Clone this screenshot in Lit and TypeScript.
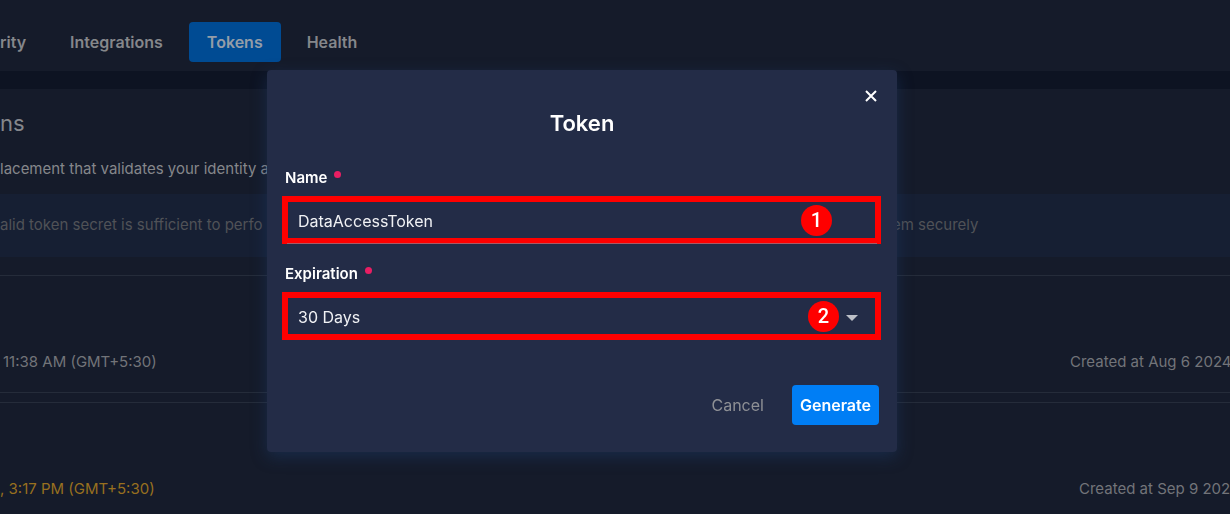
import { LitElement, html, css } from "lit";
import { customElement, property } from "lit/decorators.js";

@customElement("token-dialog")
export class TokenDialog extends LitElement {
  static styles = css`
    :host {
      display: block;
      box-sizing: border-box;
      width: 100%;
      max-width: 630px;
    }
    *, *::before, *::after { box-sizing: border-box; }
    .dialog {
      display: flex;
      flex-direction: column;
      padding: 16px 16px 27px;
      border-radius: 4px;
      background: #232c47;
      color: #fff;
      box-shadow: 0 5px 16px rgba(28, 62, 110, 0.45);
    }
    button, input, select { font: inherit; }
    .close {
      align-self: flex-end;
      display: grid;
      place-items: center;
      width: 20px;
      height: 20px;
      padding: 0;
      border: 0;
      background: none;
      color: #fff;
    }
    .title {
      margin: 1px 0 27px;
      font-size: 22px;
      font-weight: 600;
      line-height: 32px;
      text-align: center;
    }
    .label {
      display: flex;
      gap: 7px;
      padding: 0 2px;
      font-size: 15px;
      font-weight: 600;
      line-height: 24px;
    }
    .required {
      width: 7px;
      height: 7px;
      margin-top: 5px;
      border-radius: 50%;
      background: #e91e63;
    }
    .field {
      position: relative;
      height: 48px;
      margin: 6px 0 18px -1px;
      border: 6px solid #f00;
    }
    .control {
      display: block;
      width: 100%;
      height: 100%;
      padding: 2px 10px 0;
      border: 0;
      border-radius: 0;
      outline: 0;
      appearance: none;
      background: transparent;
      color: #f0f1f4;
      font-size: 16px;
    }
    .underline::after {
      content: "";
      position: absolute;
      right: -2px;
      bottom: -6px;
      left: -1px;
      height: 1px;
      background: #a85a66;
    }
    .control option { color: #000; }
    .badge {
      position: absolute;
      top: 3px;
      right: 43px;
      width: 31px;
      height: 31px;
      border-radius: 50%;
      background: #f00;
      font: 500 20px/30px Roboto, sans-serif;
      text-align: center;
      pointer-events: none;
    }
    .beside-arrow { right: 36px; }
    .arrow {
      position: absolute;
      top: 17px;
      right: 17px;
      pointer-events: none;
    }
    .actions {
      display: flex;
      justify-content: flex-end;
      gap: 20px;
      padding: 27px 2px 0;
    }
    .button {
      height: 40px;
      padding: 0 8px;
      border: 0;
      border-radius: 4px;
      background: none;
      color: #8e9095;
      font-size: 16px;
    }
    .primary {
      background: #007ef5;
      color: #fff;
      font-weight: 600;
    }
  `;

  render() {
    return html`
      <form class="dialog" role="dialog" aria-labelledby="title" @submit=${(e: Event) => e.preventDefault()}>
        <button class="close" type="button" aria-label="Close">
          <svg width="12" height="12" viewBox="0 0 12 12" fill="none" stroke="currentColor" stroke-width="2">
            <path d="M1 1l10 10M11 1L1 11" />
          </svg>
        </button>
        <h2 class="title" id="title">Token</h2>
        <label class="label" for="name">Name<span class="required"></span></label>
        <div class="field underline">
          <input class="control" id="name" type="text" value="DataAccessToken" required />
          <span class="badge">1</span>
        </div>
        <label class="label" for="expiration">Expiration<span class="required"></span></label>
        <div class="field">
          <select class="control" id="expiration" required>
            <option>30 Days</option>
          </select>
          <span class="badge beside-arrow">2</span>
          <svg class="arrow" width="12" height="6" viewBox="0 0 12 6"><path d="M0 0h12L6 6z" fill="#bdc0c8" /></svg>
        </div>
        <div class="actions">
          <button class="button" type="button">Cancel</button>
          <button class="button primary" type="submit">Generate</button>
        </div>
      </form>
    `;
  }
}

@customElement("token-row")
export class TokenRow extends LitElement {
  @property() expires = "";
  @property() created = "";
  @property({ type: Boolean, reflect: true }) expiring = false;

  static styles = css`
    :host {
      display: flex;
      justify-content: space-between;
      align-items: flex-end;
      height: 118px;
      box-sizing: border-box;
      padding-bottom: 18px;
      border: solid #252c3a;
      border-width: 1px 0;
      color: #727479;
      line-height: 24px;
      white-space: nowrap;
    }
    :host([expiring]) .expires { color: #98701f; }
    .expires { padding-left: 3px; }
    :host([expiring]) .expires { padding-left: 0; }
    .created { width: 160px; }
    :host([expiring]) .created { width: 151px; }
  `;

  render() {
    return html`
      <span class="expires">${this.expires}</span>
      <span class="created">${this.created}</span>
    `;
  }
}

@customElement("app-root")
export class AppRoot extends LitElement {
  static styles = css`
    :host {
      display: block;
      height: 100vh;
      overflow: hidden;
      background: #0d1322;
      color: #85878b;
      font-family: Inter, "Open Sans", sans-serif;
      font-size: 15px;
      line-height: 24px;
    }
    *, *::before, *::after { box-sizing: border-box; }
    .nav {
      display: flex;
      gap: 8px;
      padding: 22px 0 9px;
      background: #151b2a;
      font-size: 16px;
    }
    .tab {
      padding: 8px 18px;
      border-radius: 4px;
      color: inherit;
      font-weight: 600;
      text-decoration: none;
    }
    .tab:first-child { padding-left: 0; }
    .active { background: #004b93; color: #949da8; }
    .panel {
      margin-top: 18px;
      background: #151b2a;
      white-space: nowrap;
    }
    .heading {
      margin: 0;
      padding-top: 18px;
      font-size: 22px;
      font-weight: 400;
      line-height: 32px;
    }
    .intro { margin: 0; padding: 18px 0 13px; }
    .notice {
      display: grid;
      grid-template-columns: minmax(0, 892fr) minmax(0, 338fr);
      margin-bottom: 18px;
      padding: 19px 0 20px;
      background: #161f33;
      color: #505257;
    }
    .list {
      display: flex;
      flex-direction: column;
      gap: 9px;
    }
    .overlay {
      position: fixed;
      inset: 0;
      display: flex;
      justify-content: center;
      align-items: flex-start;
      padding: 70px 66px 0 0;
    }
  `;

  render() {
    return html`
      <nav class="nav">
        <a class="tab" href="#security">rity</a>
        <a class="tab" href="#integrations">Integrations</a>
        <a class="tab active" href="#tokens" aria-current="page">Tokens</a>
        <a class="tab" href="#health">Health</a>
      </nav>
      <main class="panel">
        <h1 class="heading">ns</h1>
        <p class="intro">lacement that validates your identity a</p>
        <div class="notice">
          <span>alid token secret is sufficient to perfo</span>
          <span>em securely</span>
        </div>
        <div class="list">
          <token-row expires="11:38 AM (GMT+5:30)" created="Created at Aug 6 2024"></token-row>
          <token-row expiring expires=", 3:17 PM (GMT+5:30)" created="Created at Sep 9 2024"></token-row>
        </div>
      </main>
      <div class="overlay"><token-dialog></token-dialog></div>
    `;
  }
}
